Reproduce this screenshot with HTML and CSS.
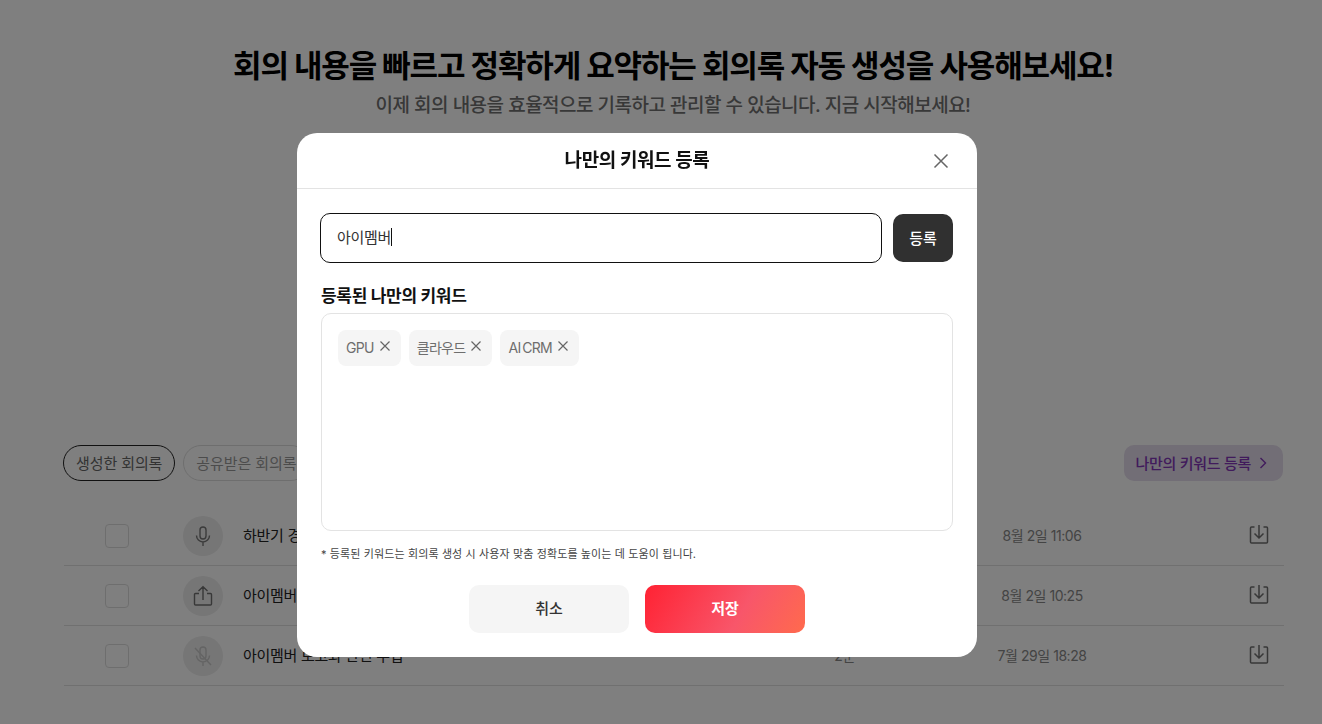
FILE: index.html
```html
<!DOCTYPE html>
<html lang="ko">
<head>
    <meta charset="UTF-8">
    <meta name="viewport" content="width=device-width, initial-scale=1.0">
    <title>회의록 자동 생성</title>
    <link rel="stylesheet" href="styles.css">
</head>
<body>
    <div class="page">
        <div class="hero">
            <h1>회의 내용을 빠르고 정확하게 요약하는 회의록 자동 생성을 사용해보세요!</h1>
            <p>이제 회의 내용을 효율적으로 기록하고 관리할 수 있습니다. 지금 시작해보세요!</p>
        </div>

        <div class="list-head">
            <div class="tabs">
                <button class="tab active">생성한 회의록</button>
                <button class="tab">공유받은 회의록</button>
            </div>
            <button class="keyword-link">
                <span>나만의 키워드 등록</span>
                <svg width="16" height="16" viewBox="0 0 16 16" fill="none" stroke="currentColor" stroke-width="1.4"><path d="M5.5 3 10.5 8l-5 5"/></svg>
            </button>
        </div>

        <div class="rows">
            <div class="row">
                <span class="check"></span>
                <span class="round">
                    <svg width="24" height="24" viewBox="0 0 24 24" fill="none" stroke="#777" stroke-width="1.4"><rect x="9" y="3" width="6" height="12" rx="3"/><path d="M5.5 11.5a6.5 6.5 0 0 0 13 0M12 18v4"/></svg>
                </span>
                <span class="title">하반기 경영 전략 회의</span>
                <span class="length">5분</span>
                <span class="date">8월 2일 11:06</span>
                <svg class="save" width="24" height="24" viewBox="0 0 24 24" fill="none" stroke="#707070" stroke-width="1.5"><path d="M7.5 5H4.5a1 1 0 0 0-1 1v14a1 1 0 0 0 1 1h15a1 1 0 0 0 1-1V6a1 1 0 0 0-1-1h-3M12 3v13M7.5 11.5 12 16l4.5-4.5"/></svg>
            </div>
            <div class="row">
                <span class="check"></span>
                <span class="round">
                    <svg width="24" height="24" viewBox="0 0 24 24" fill="none" stroke="#707070" stroke-width="1.4"><path d="M8 9.5H4.5a1 1 0 0 0-1 1V20a1 1 0 0 0 1 1h15a1 1 0 0 0 1-1v-9.500a1 1 0 0 0-1-1H16M12 16V3M7.500 7 12 2.800 16.500 7"/></svg>
                </span>
                <span class="title">아이멤버 주간 회의</span>
                <span class="length">3분</span>
                <span class="date">8월 2일 10:25</span>
                <svg class="save" width="24" height="24" viewBox="0 0 24 24" fill="none" stroke="#707070" stroke-width="1.5"><path d="M7.5 5H4.5a1 1 0 0 0-1 1v14a1 1 0 0 0 1 1h15a1 1 0 0 0 1-1V6a1 1 0 0 0-1-1h-3M12 3v13M7.5 11.5 12 16l4.5-4.5"/></svg>
            </div>
            <div class="row">
                <span class="check"></span>
                <span class="round">
                    <svg width="24" height="24" viewBox="0 0 24 24" fill="none" stroke="#c8c8c8" stroke-width="1.4"><rect x="9" y="3" width="6" height="12" rx="3"/><path d="M5.5 11.5a6.5 6.5 0 0 0 13 0M12 18v4M4 4l16 17"/></svg>
                </span>
                <span class="title">아이멤버 보고와 관련 수집</span>
                <span class="length">2분</span>
                <span class="date">7월 29일 18:28</span>
                <svg class="save" width="24" height="24" viewBox="0 0 24 24" fill="none" stroke="#707070" stroke-width="1.5"><path d="M7.5 5H4.5a1 1 0 0 0-1 1v14a1 1 0 0 0 1 1h15a1 1 0 0 0 1-1V6a1 1 0 0 0-1-1h-3M12 3v13M7.5 11.5 12 16l4.5-4.5"/></svg>
            </div>
        </div>
    </div>

    <div class="overlay">
        <div class="modal">
            <div class="modal-head">
                <h2>나만의 키워드 등록</h2>
                <button class="close">
                    <svg width="24" height="24" viewBox="0 0 24 24" fill="none" stroke="#666" stroke-width="1.5"><path d="M5.500 5.500l13 13M18.500 5.500l-13 13"/></svg>
                </button>
            </div>
            <div class="modal-body">
                <div class="input-row">
                    <div class="text-input"><span>아이멤버</span><i class="caret"></i></div>
                    <button class="add">등록</button>
                </div>
                <div class="section-title">등록된 나만의 키워드</div>
                <div class="keyword-box">
                    <span class="chip">GPU <svg width="14" height="14" viewBox="0 0 14 14" fill="none" stroke="#666" stroke-width="1.200"><path d="M2.500 2.500l9 9M11.500 2.500l-9 9"/></svg></span>
                    <span class="chip">클라우드 <svg width="14" height="14" viewBox="0 0 14 14" fill="none" stroke="#666" stroke-width="1.200"><path d="M2.500 2.500l9 9M11.500 2.500l-9 9"/></svg></span>
                    <span class="chip">AI CRM <svg width="14" height="14" viewBox="0 0 14 14" fill="none" stroke="#666" stroke-width="1.200"><path d="M2.500 2.500l9 9M11.500 2.500l-9 9"/></svg></span>
                </div>
                <p class="note">* 등록된 키워드는 회의록 생성 시 사용자 맞춤 정확도를 높이는 데 도움이 됩니다.</p>
                <div class="actions">
                    <button class="cancel">취소</button>
                    <button class="submit">저장</button>
                </div>
            </div>
        </div>
    </div>
</body>
</html>
```

FILE: styles.css
```css
* {
    box-sizing: border-box;
}

html, body {
    height: 100%;
}

body {
    margin: 0;
    overflow: hidden;
    background: #fff;
    color: #111;
    font-family: Inter, "Noto Sans CJK KR", sans-serif;
}

button {
    font-family: inherit;
    border: none;
    cursor: pointer;
}

.page {
    padding: 43px 39px 0 63px;
}

.hero {
    text-align: center;
    margin-bottom: 325px;
}

.hero h1 {
    margin: 0;
    font-size: 31px;
    line-height: 46px;
    font-weight: 700;
    letter-spacing: -1.15px;
    color: #000;
}

.hero p {
    margin: 3px 0 0;
    font-size: 19px;
    line-height: 28px;
    font-weight: 500;
    letter-spacing: -0.5px;
    color: #707070;
}

.list-head {
    display: flex;
    justify-content: space-between;
    align-items: center;
    margin-bottom: 25px;
}

.tabs {
    display: flex;
    gap: 8px;
}

.tab {
    height: 36px;
    padding: 0 12px 2px;
    border: 1px solid #ddd;
    border-radius: 18px;
    background: #fff;
    font-size: 15px;
    letter-spacing: -0.1px;
    color: #999;
}

.tab.active {
    border-color: #222;
    color: #666;
}

.keyword-link {
    display: flex;
    align-items: center;
    gap: 4px;
    height: 36px;
    padding: 0 12px;
    border-radius: 10px;
    background: #e4dcec;
    color: #8236b8;
    font-size: 15px;
    font-weight: 500;
    letter-spacing: -0.3px;
}

.keyword-link span {
    padding-bottom: 2px;
}

.row {
    display: flex;
    align-items: center;
    height: 60px;
    margin-left: 1px;
    margin-right: -1px;
    border-bottom: 1px solid #e0e0e0;
    font-size: 14px;
}

.check {
    width: 24px;
    height: 24px;
    margin-left: 41px;
    border: 1px solid #ddd;
    border-radius: 4px;
    background: #fff;
}

.round {
    display: flex;
    align-items: center;
    justify-content: center;
    width: 40px;
    height: 40px;
    margin-left: 54px;
    border-radius: 50%;
    background: #ececec;
}

.title {
    width: 580px;
    margin-left: 20px;
    padding-bottom: 2px;
    font-size: 15px;
    letter-spacing: -0.3px;
    color: #222;
}

.length {
    width: 44px;
    padding-bottom: 2px;
    text-align: center;
    color: #888;
}

.date {
    width: 180px;
    margin-left: 85px;
    padding-bottom: 2px;
    text-align: center;
    letter-spacing: -0.45px;
    color: #888;
}

.save {
    margin-left: 115px;
    margin-bottom: 3px;
}

.overlay {
    position: fixed;
    inset: 0;
    display: flex;
    align-items: flex-start;
    justify-content: center;
    padding: 133px 48px 0 0;
    background: rgba(0, 0, 0, 0.5);
}

.modal {
    width: 680px;
    height: 524px;
    border-radius: 20px;
    background: #fff;
}

.modal-head {
    position: relative;
    height: 56px;
    border-bottom: 1px solid #e3e3e3;
    text-align: center;
}

.modal-head h2 {
    margin: 0;
    font-size: 19px;
    line-height: 55px;
    font-weight: 700;
    letter-spacing: -0.4px;
    color: #111;
}

.close {
    position: absolute;
    top: 16px;
    right: 24px;
    padding: 0;
    width: 24px;
    height: 24px;
    background: none;
}

.modal-body {
    padding: 24px 24px 0;
}

.input-row {
    display: flex;
    align-items: center;
    gap: 11px;
    margin-left: -1px;
}

.text-input {
    display: flex;
    align-items: center;
    width: 562px;
    height: 50px;
    padding: 0 16px 2px;
    border: 1px solid #111;
    border-radius: 10px;
    font-size: 15px;
    color: #333;
    letter-spacing: -0.3px;
}

.text-input span {
    padding-bottom: 2px;
}

.caret {
    width: 1px;
    height: 18px;
    background: #111;
}

.add {
    width: 60px;
    height: 48px;
    padding: 0 0 2px;
    border-radius: 10px;
    background: #303030;
    color: #fff;
    font-size: 15px;
    font-weight: 500;
}

.section-title {
    margin: 21px 0 5px;
    font-size: 17px;
    line-height: 24px;
    font-weight: 700;
    letter-spacing: -0.3px;
    color: #111;
}

.keyword-box {
    display: flex;
    align-items: flex-start;
    gap: 8px;
    width: 632px;
    height: 218px;
    padding: 16px;
    border: 1px solid #e3e3e3;
    border-radius: 10px;
}

.chip {
    display: flex;
    align-items: center;
    gap: 4px;
    height: 36px;
    padding: 0 9px 2px 8px;
    border-radius: 8px;
    background: #f5f5f5;
    font-size: 14px;
    letter-spacing: -0.7px;
    word-spacing: -1.5px;
    color: #6e6e6e;
}

.chip svg {
    margin-top: -2px;
}

.note {
    margin: 15px 0 0;
    font-size: 11px;
    line-height: 16px;
    letter-spacing: 0.12px;
    color: #444;
}

.actions {
    display: flex;
    justify-content: center;
    gap: 16px;
    margin-top: 23px;
}

.actions button {
    width: 160px;
    height: 48px;
    padding: 0 0 3px;
    border-radius: 10px;
    font-size: 15px;
    font-weight: 600;
}

.actions .cancel {
    background: #f5f5f5;
    color: #333;
    font-weight: 500;
}

.submit {
    background: linear-gradient(120deg, #ff2233 0%, #f8566a 60%, #ff6a4d 100%);
    color: #fff;
}
```
